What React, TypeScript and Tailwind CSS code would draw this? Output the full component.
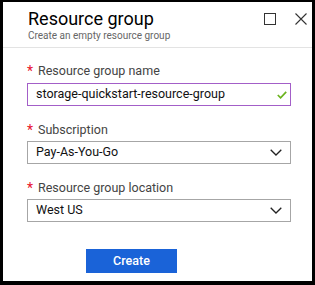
import React from "react";

const Label: React.FC<{ text: string }> = ({ text }) => (
    <div className="flex h-[16px] text-[12.5px] leading-[16px] text-[#444]">
        <span className="w-[11px] text-[#e8112d] text-[14px] leading-[16px]">*</span>
        <span>{text}</span>
    </div>
);

const Chevron = () => (
    <svg width="12" height="7" viewBox="0 0 12 7" fill="none">
        <path d="M0.7 0.7 L6 6 L11.3 0.7" stroke="#222" strokeWidth="1.3" />
    </svg>
);

const Select: React.FC<{ value: string }> = ({ value }) => (
    <div className="flex items-center justify-between h-[23px] border border-[#a6a6a6] pl-[8px] pr-[8px] text-[12.5px] text-[#111]">
        <span>{value}</span>
        <Chevron />
    </div>
);

export default function App() {
    return (
        <div
            className="w-[315px] h-[285px] bg-white border-black border-t-2 border-l-[3px] border-r-[3px] border-b-4 flex flex-col"
            style={{ fontFamily: 'Roboto, "Noto Sans", sans-serif' }}
        >
            {/* header */}
            <div className="flex justify-between border-b border-[#e3e3e3] h-[46px] pl-[25px] pr-[5px]">
                <div className="pt-[6px]">
                    <div className="text-[18px] leading-[22px] text-black">Resource group</div>
                    <div className="text-[10px] leading-[12px] text-[#666]">Create an empty resource group</div>
                </div>
                <div className="flex gap-[19px] pt-[11px]">
                    <svg width="12" height="12" viewBox="0 0 12 12" fill="none">
                        <rect x="0.5" y="0.5" width="11" height="11" stroke="#333" strokeWidth="1" />
                    </svg>
                    <svg width="12" height="12" viewBox="0 0 12 12" fill="none">
                        <path d="M0.5 0.5 L11.5 11.5 M11.5 0.5 L0.5 11.5" stroke="#333" strokeWidth="1.1" />
                    </svg>
                </div>
            </div>

            {/* form */}
            <div className="flex flex-col pl-[24px] pr-[21px] pt-[15px]">
                <Label text="Resource group name" />
                <div className="mt-[4px] flex items-center justify-between h-[23px] border border-[#a35ec8] pl-[8px] pr-[3px] text-[12.5px] text-[#111]">
                    <span>storage-quickstart-resource-group</span>
                    <svg width="10" height="8" viewBox="0 0 10 8" fill="none">
                        <path d="M0.8 4 L3.6 6.8 L9.2 0.8" stroke="#6bb31e" strokeWidth="1.7" />
                    </svg>
                </div>

                <div className="mt-[16px]">
                    <Label text="Subscription" />
                </div>
                <div className="mt-[3px]">
                    <Select value="Pay-As-You-Go" />
                </div>

                <div className="mt-[16px]">
                    <Label text="Resource group location" />
                </div>
                <div className="mt-[3px]">
                    <Select value="West US" />
                </div>

                <div className="mt-[26px] pl-[59px]">
                    <button className="w-[91px] h-[24px] bg-[#1a63d8] text-white text-[12.5px] font-medium leading-[24px]">
                        Create
                    </button>
                </div>
            </div>
        </div>
    );
}
